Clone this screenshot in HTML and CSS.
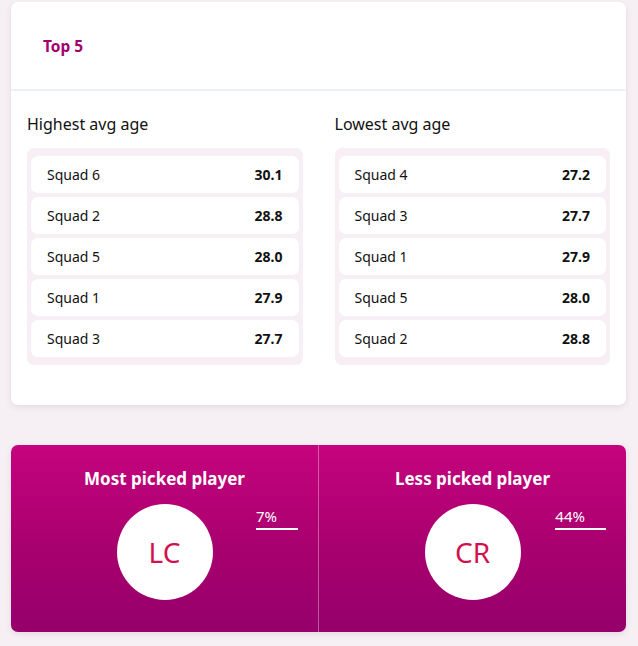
FILE: index.html
```html
<!DOCTYPE html>
<html>
<head>
<meta charset="utf-8">
<link rel="stylesheet" href="styles.css">
</head>
<body>
<div class="page">
  <section class="card top5">
    <header class="card-header"><h2>Top 5</h2></header>
    <div class="card-body">
      <div class="col">
        <h3>Highest avg age</h3>
        <ul class="list">
          <li><span>Squad 6</span><b>30.1</b></li>
          <li><span>Squad 2</span><b>28.8</b></li>
          <li><span>Squad 5</span><b>28.0</b></li>
          <li><span>Squad 1</span><b>27.9</b></li>
          <li><span>Squad 3</span><b>27.7</b></li>
        </ul>
      </div>
      <div class="col">
        <h3>Lowest avg age</h3>
        <ul class="list">
          <li><span>Squad 4</span><b>27.2</b></li>
          <li><span>Squad 3</span><b>27.7</b></li>
          <li><span>Squad 1</span><b>27.9</b></li>
          <li><span>Squad 5</span><b>28.0</b></li>
          <li><span>Squad 2</span><b>28.8</b></li>
        </ul>
      </div>
    </div>
  </section>
  <section class="picks">
    <div class="pick">
      <h3>Most picked player</h3>
      <div class="avatar">LC</div>
      <span class="pct">7%</span>
    </div>
    <div class="pick">
      <h3>Less picked player</h3>
      <div class="avatar">CR</div>
      <span class="pct">44%</span>
    </div>
  </section>
</div>
</body>
</html>
```
FILE: styles.css
```css
* { box-sizing: border-box; }
html, body { margin: 0; padding: 0; }
body {
  background: #f6f0f4;
  font-family: "Noto Sans", "Open Sans", sans-serif;
  color: #111;
}
.page {
  padding: 2px 12px 14px 11px;
  display: flex;
  flex-direction: column;
  gap: 40px;
}
.card {
  background: #fff;
  border-radius: 7px;
  box-shadow: 0 2px 6px rgba(60, 20, 50, 0.10);
}
.card-header {
  height: 89px;
  border-bottom: 2px solid #eef0f7;
  display: flex;
  align-items: center;
  padding-left: 32px;
}
.card-header h2 {
  margin: 0;
  font-size: 15.5px;
  font-weight: 700;
  color: #a1006f;
}
.card-body {
  display: grid;
  grid-template-columns: 1fr 1fr;
  column-gap: 32px;
  padding: 22px 16px 40px 16px;
}
.col h3 {
  margin: 0 0 13px 0;
  font-size: 16px;
  font-weight: 400;
  line-height: 22px;
}
.list {
  list-style: none;
  margin: 0;
  padding: 8px 4px;
  background: #f7eff3;
  border-radius: 7px;
  display: flex;
  flex-direction: column;
  gap: 4px;
}
.list li {
  height: 37px;
  background: #fff;
  border-radius: 7px;
  display: flex;
  align-items: center;
  justify-content: space-between;
  padding: 0 16px 1px;
  font-size: 14px;
}
.list li b { font-weight: 700; }
.picks {
  display: grid;
  grid-template-columns: 307px 1fr;
  height: 187px;
  border-radius: 7px;
  background: linear-gradient(180deg, #c5037d 0%, #a8006f 55%, #95006a 100%);
  box-shadow: 0 2px 6px rgba(60, 20, 50, 0.10);
  color: #fff;
}
.pick {
  position: relative;
  display: flex;
  flex-direction: column;
  align-items: center;
  padding-top: 22px;
}
.pick + .pick { border-left: 1px solid rgba(255, 255, 255, 0.35); }
.pick h3 {
  margin: 0 0 13px 0;
  font-size: 17px;
  font-weight: 700;
  line-height: 24px;
}
.avatar {
  width: 96px;
  height: 96px;
  border-radius: 50%;
  background: #fff;
  color: #d2114f;
  font-size: 28px;
  display: flex;
  align-items: center;
  justify-content: center;
}
.pct {
  position: absolute;
  top: 59px;
  right: 20px;
  font-size: 15px;
  line-height: 24px;
  padding-right: 21px;
  border-bottom: 2px solid #fff;
}
```
